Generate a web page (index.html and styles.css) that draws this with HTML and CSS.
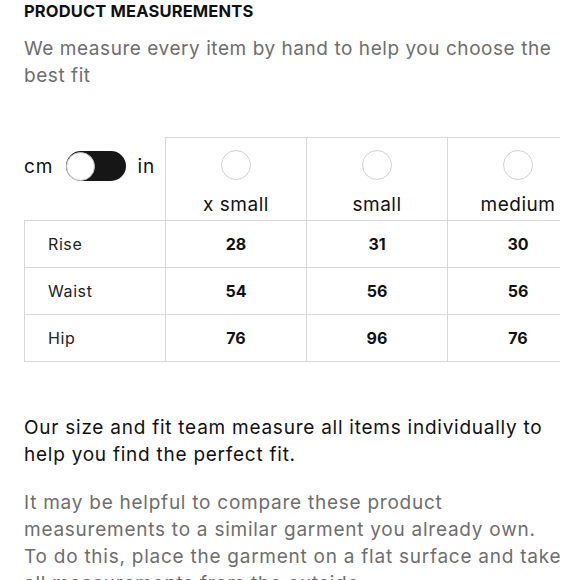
FILE: index.html
```html
<!DOCTYPE html>
<html>
<head>
<meta charset="utf-8">
<link rel="stylesheet" href="styles.css">
</head>
<body>
<div class="page">
  <h1 class="title">PRODUCT MEASUREMENTS</h1>
  <p class="intro">We measure every item by hand to help you choose the best fit</p>

  <div class="table-wrap">
    <div class="grid">
      <div class="hcell first">
        <div class="units">
          <span class="unit">cm</span>
          <span class="toggle"><span class="knob"></span></span>
          <span class="unit">in</span>
        </div>
      </div>
      <div class="hcell size"><span class="radio"></span><span class="size-name">x small</span></div>
      <div class="hcell size"><span class="radio"></span><span class="size-name">small</span></div>
      <div class="hcell size"><span class="radio"></span><span class="size-name">medium</span></div>

      <div class="cell label lead">Rise</div>
      <div class="cell num">28</div>
      <div class="cell num">31</div>
      <div class="cell num">30</div>

      <div class="cell label lead">Waist</div>
      <div class="cell num">54</div>
      <div class="cell num">56</div>
      <div class="cell num">56</div>

      <div class="cell label lead">Hip</div>
      <div class="cell num">76</div>
      <div class="cell num">96</div>
      <div class="cell num">76</div>
    </div>
  </div>

  <p class="body-text dark">Our size and fit team measure all items individually to help you find the perfect fit.</p>
  <p class="body-text grey">It may be helpful to compare these product measurements to a similar garment you already own. To do this, place the garment on a flat surface and take all measurements from the outside.</p>
</div>
</body>
</html>
```
FILE: styles.css
```css
html, body {
  margin: 0;
  padding: 0;
  background: #ffffff;
}

body {
  font-family: Inter, "Noto Sans", "Liberation Sans", sans-serif;
  color: #111111;
  overflow: hidden;
}

.page {
  padding: 1px 18px 0 24px;
}

.title {
  margin: 0;
  font-size: 16.5px;
  line-height: 20px;
  font-weight: 700;
  letter-spacing: 0.15px;
  color: #111111;
}

.intro {
  margin: 14px 0 0;
  font-size: 19px;
  line-height: 27px;
  color: #6e6e6e;
  letter-spacing: 0.55px;
}

.table-wrap {
  margin-top: 48px;
  width: 536px;
  overflow: hidden;
}

.grid {
  display: grid;
  grid-template-columns: 142px 141px 141px 141px;
  width: 565px;
}

.hcell {
  height: 83px;
  box-sizing: border-box;
}

.hcell.first {
  border-right: 1px solid #d8d8d8;
  padding-top: 14px;
}

.hcell.size {
  border-top: 1px solid #d8d8d8;
  border-right: 1px solid #d8d8d8;
  display: flex;
  flex-direction: column;
  align-items: center;
  padding-top: 12px;
}

.units {
  display: flex;
  align-items: center;
  gap: 12px;
  height: 30px;
}

.unit {
  font-size: 19px;
  color: #111111;
  letter-spacing: 1px;
}

.toggle {
  width: 60px;
  height: 30px;
  border-radius: 15px;
  background: #161616;
  display: flex;
  align-items: center;
  box-sizing: border-box;
}

.knob {
  width: 29px;
  height: 29px;
  border-radius: 50%;
  background: #ffffff;
  border: 1px solid #bdbdbd;
  box-sizing: border-box;
}

.radio {
  width: 30px;
  height: 30px;
  border-radius: 50%;
  border: 1px solid #d2d2d2;
  box-sizing: border-box;
}

.size-name {
  margin-top: 14px;
  font-size: 19px;
  line-height: 22px;
  color: #111111;
  letter-spacing: 0.5px;
}

.cell {
  height: 47px;
  box-sizing: border-box;
  border-top: 1px solid #d8d8d8;
  border-right: 1px solid #d8d8d8;
  display: flex;
  align-items: center;
  font-size: 16px;
}

.grid > .cell:nth-last-child(-n+4) {
  border-bottom: 1px solid #d8d8d8;
  height: 48px;
}

.cell.lead {
  border-left: 1px solid #d8d8d8;
  padding-left: 23px;
  color: #222222;
  letter-spacing: 0.6px;
}

.cell.num {
  justify-content: center;
  font-weight: 700;
  color: #111111;
}

.body-text {
  font-size: 19px;
  line-height: 27px;
  margin: 0;
  letter-spacing: 0.75px;
}

.body-text.dark {
  margin-top: 52px;
  color: #111111;
}

.body-text.grey {
  margin-top: 21px;
  color: #6e6e6e;
}
```
